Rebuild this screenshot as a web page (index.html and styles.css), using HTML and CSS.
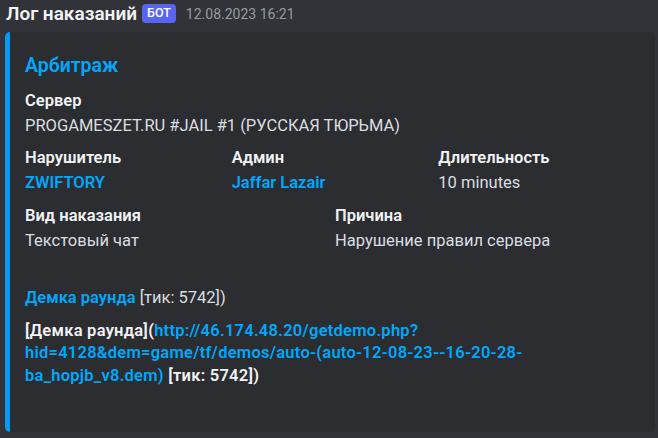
FILE: index.html
```html
<!DOCTYPE html>
<html>
<head lang="ru">
    <meta charset="UTF-8">
    <title>Лог наказаний</title>
    <link rel="stylesheet" href="styles.css">
</head>
<body>
<div id="message">
    <div class="header">
        <span class="username">Лог наказаний</span>
        <span class="bot-tag">БОТ</span>
        <span class="timestamp">12.08.2023 16:21</span>
    </div>
    <div class="embed">
        <div class="embed-title">Арбитраж</div>
        <div class="fields">
            <div class="field span-12">
                <div class="field-name">Сервер</div>
                <div class="field-value">PROGAMESZET.RU #JAIL #1 (РУССКАЯ ТЮРЬМА)</div>
            </div>
            <div class="field span-4">
                <div class="field-name">Нарушитель</div>
                <div class="field-value"><a class="link bold">ZWIFTORY</a></div>
            </div>
            <div class="field span-4">
                <div class="field-name">Админ</div>
                <div class="field-value"><a class="link bold">Jaffar Lazair</a></div>
            </div>
            <div class="field span-4">
                <div class="field-name">Длительность</div>
                <div class="field-value">10 minutes</div>
            </div>
            <div class="field span-6">
                <div class="field-name">Вид наказания</div>
                <div class="field-value">Текстовый чат</div>
            </div>
            <div class="field span-6">
                <div class="field-name">Причина</div>
                <div class="field-value">Нарушение правил сервера</div>
            </div>
            <div class="field span-12">
                <div class="field-name blank"></div>
                <div class="field-value"><a class="link bold">Демка раунда</a> [тик: 5742])</div>
            </div>
            <div class="field span-12">
                <div class="field-name wide">[Демка раунда](<a class="link">http://46.174.48.20/getdemo.php?<br>hid=4128&amp;dem=game/tf/demos/auto-(auto-12-08-23--16-20-28-<br>ba_hopjb_v8.dem)</a> [тик: 5742])</div>
                <div class="field-value blank"></div>
            </div>
        </div>
    </div>
</div>
</body>
</html>
```

FILE: styles.css
```css
*{
    margin: 0;
    padding: 0;
    box-sizing: border-box;
}
body{
    background: #313338;
    font-family: Roboto, "Noto Sans", "Liberation Sans", sans-serif;
    color: #dbdee1;
}
#message{
    padding: 0 0 0 5px;
}
.header{
    display: flex;
    align-items: center;
    height: 27.5px;
    white-space: nowrap;
}
.username{
    font-size: 19px;
    font-weight: 600;
    color: #f2f3f5;
    line-height: 27.5px;
    padding-left: 1px;
}
.bot-tag{
    margin-left: 5px;
    height: 18.5px;
    padding: 0 5px;
    background: #5865f2;
    color: #ffffff;
    font-size: 12.5px;
    font-weight: 500;
    line-height: 18.5px;
    border-radius: 4px;
    margin-top: -1px;
}
.timestamp{
    margin-left: 10px;
    font-size: 14px;
    color: #949ba4;
}
.embed{
    margin-top: 4.5px;
    width: 650px;
    background: #2b2d31;
    border-left: 5px solid #0a99f2;
    border-radius: 5px;
    padding: 10px 20px 20px 15px;
}
.embed-title{
    margin-top: 10px;
    font-size: 19.5px;
    font-weight: 600;
    line-height: 27.5px;
    color: #00a8fc;
}
.fields{
    margin-top: 10px;
    display: grid;
    grid-template-columns: repeat(12, 1fr);
    gap: 10px;
}
.span-12{ grid-column: span 12; }
.span-6{ grid-column: span 6; }
.span-4{ grid-column: span 4; }
.field-name{
    font-size: 16.5px;
    font-weight: 600;
    line-height: 22.5px;
    color: #f2f3f5;
    margin-bottom: 2.5px;
}
.field-name.wide{
    letter-spacing: 0.25px;
}
.field-value{
    font-size: 16.5px;
    line-height: 22.5px;
    color: #dbdee1;
}
.blank{
    height: 22.5px;
}
.link{
    color: #00a8fc;
}
.bold{
    font-weight: 600;
}
```
